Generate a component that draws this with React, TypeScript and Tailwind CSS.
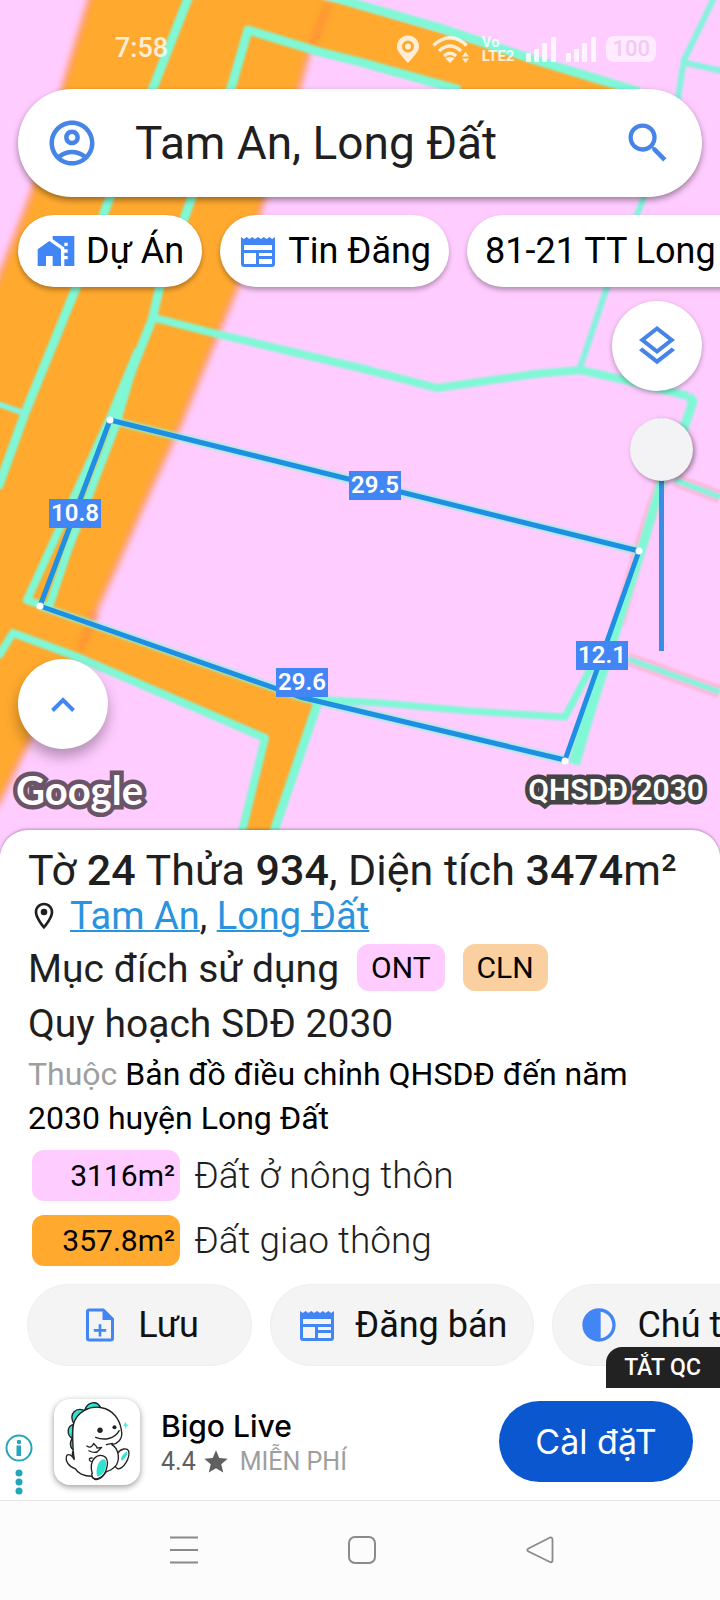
import React from 'react';
import {
  MdContrast,
  MdHomeWork,
  MdOutlineAccountCircle,
  MdOutlineLayers,
  MdOutlineLocationOn,
  MdSearch,
  MdStar,
} from 'react-icons/md';

interface Edge {
  length: string;
  x: number;
  y: number;
}

interface LandUse {
  area: string;
  name: string;
  swatch: string;
}

const edges: Edge[] = [
  { length: '29.5', x: 375, y: 486 },
  { length: '10.8', x: 75, y: 514 },
  { length: '12.1', x: 602, y: 656 },
  { length: '29.6', x: 302, y: 683 },
];

const landUses: LandUse[] = [
  { area: '3116m²', name: 'Đất ở nông thôn', swatch: 'bg-[#ffccff]' },
  { area: '357.8m²', name: 'Đất giao thông', swatch: 'bg-[#ffa92e]' },
];

const ParcelMap: React.FC = () => {
  return (
    <svg viewBox="0 0 720 880" className="absolute inset-x-0 top-0 w-full" aria-hidden="true">
      <defs>
        <filter id="soft" x="-5%" y="-5%" width="110%" height="110%">
          <feGaussianBlur stdDeviation="3" />
        </filter>
        <filter id="softLine" x="-5%" y="-5%" width="110%" height="110%">
          <feGaussianBlur stdDeviation="1.3" />
        </filter>
      </defs>
      <rect width="720" height="880" fill="#ffccff" />

      {/* roads */}
      <g filter="url(#soft)" fill="#ffa92e" stroke="#ff8f6a" strokeOpacity="0.6" strokeWidth="5">
        <path d="M92-10 65 80 30 198-10 300V815L0 800 22 755 75 655 98 606 118 562 150 490 180 425 213 345 236 290 262 205 300 85 318 20 328-10Z" />
      </g>
      <g filter="url(#softLine)" fill="#ffa92e">
        <path d="M320 0 340 2 440 32 535 62 640 92 460 92 360 64 247 30Z" />
        <path d="M40 606 275 688 318 702 270 840 238 840 265 738 75 658 13 632Z" />
      </g>
      <path d="M328 5 312 45M96 612 80 650" stroke="#ff7f3a" strokeWidth="6" opacity="0.6" filter="url(#soft)" />

      {/* parcel borders */}
      <g filter="url(#softLine)" fill="none" strokeLinejoin="round">
        <path d="M662 480 639 551 618 625M675 480 720 497M628 659 720 692" stroke="#ffa0b0" strokeOpacity="0.5" strokeWidth="13" />
        <g stroke="#80f8d6" strokeWidth="9">
          <path d="M189-4 153 88 107 205 76 288 25 413-2 488" />
          <path d="M232 85 189 205 159 290 152 320 117 407" />
          <path d="M232 85 248 30 320 52 360 62 460 90" />
          <path d="M322-6 360 5 440 28 535 60 640 92" />
          <path d="M138 350 110 418 27 600 52 609M138 350 116 425 68 550 50 604" strokeWidth="8" />
          <path d="M155 318 213 333 360 368 437 388 535 374 580 370 625 380 688 396" strokeWidth="8" />
          <path d="M688 396 693 401 680 440M662 480 642 548 575 762" />
          <path d="M600 672 574 764" strokeWidth="12" />
          <path d="M-2 657 13 633 75 656 265 738 240 840" strokeWidth="8" />
          <path d="M318 702 271 840" />
          <path d="M110 420 639 551M40 606 300 697 565 760" strokeWidth="8" strokeOpacity="0.8" />
          <path d="M310 699 380 703 470 711 565 717 595 660" strokeWidth="7" />
        </g>
        <g stroke="#86f2de" strokeWidth="6">
          <path d="M-2 404 24 413" />
          <path d="M715-4 684 60 678 98 641 205 606 290 580 368M682 62 722 71" />
          <path d="M675 480 720 497M628 659 720 692" />
        </g>
      </g>

      {/* selected parcel */}
      <path d="M110 420 639 551 565 760 300 697 40 606Z" fill="none" stroke="#1f8fe3" strokeWidth="5" strokeLinejoin="round" />
      <g fill="#fff">
        <circle cx="110" cy="420" r="3.5" />
        <circle cx="639" cy="551" r="3.5" />
        <circle cx="565" cy="761" r="3.5" />
        <circle cx="40" cy="606" r="3.5" />
      </g>
      {edges.map((edge) => (
        <g key={edge.length}>
          <rect x={edge.x - 26} y={edge.y - 15} width="52" height="29" fill="#4285f4" />
          <text x={edge.x} y={edge.y + 7} textAnchor="middle" fill="#fff" fontSize="24" fontWeight="600">
            {edge.length}
          </text>
        </g>
      ))}
    </svg>
  );
};

const PinIcon: React.FC = () => (
  <svg viewBox="0 0 24 28" className="h-7 w-6" aria-hidden="true">
    <path
      d="M12 28C4 19 1 16 1 11.500a11 11 0 0 1 22 0C23 16 20 19 12 28ZM12 5.500a6 6 0 1 0 0 12 6 6 0 0 0 0-12Z"
      fill="currentColor"
      fillRule="evenodd"
    />
    <circle cx="12" cy="11.500" r="3" fill="currentColor" />
  </svg>
);

const WifiIcon: React.FC = () => (
  <svg viewBox="0 0 38 28" className="h-7 w-[38px]" fill="none" stroke="currentColor" strokeWidth="3.5" aria-hidden="true">
    <path d="M1.500 10.500Q18 -5 34.500 10.500M7 16Q18 6 29 16M12 21Q18 15.500 24 21" />
    <path d="M13.500 23.500Q18 20 22.500 23.500L18 28Z" fill="currentColor" stroke="none" />
    <path d="M30 21.500 33.500 17 37 21.500ZM30 23.500 33.500 28 37 23.500Z" fill="currentColor" stroke="none" />
  </svg>
);

const SignalIcon: React.FC = () => (
  <svg viewBox="0 0 32 26" className="h-[26px] w-8" fill="currentColor" aria-hidden="true">
    <rect x="0" y="17" width="5" height="9" rx="1" />
    <rect x="8" y="13" width="5" height="13" rx="1" />
    <rect x="16" y="7" width="5" height="19" rx="1" />
    <rect x="25" y="1" width="5" height="25" rx="1" />
  </svg>
);

const NewspaperIcon: React.FC = () => (
  <svg viewBox="0 0 34 31" className="h-[31px] w-[34px]" aria-hidden="true">
    <path
      d="M0 1 2.800 3 5.600 1 8.400 3 11.200 1 14 3 17 1 20 3 22.800 1 25.600 3 28.400 1 31.200 3 34 1V28a3 3 0 0 1-3 3H3a3 3 0 0 1-3-3ZM3 9V14H31V9ZM3 17V28H15V17ZM18 17V20H31V17ZM18 23V28H31V23Z"
      fill="currentColor"
      fillRule="evenodd"
    />
  </svg>
);

const NoteAddIcon: React.FC = () => (
  <svg viewBox="0 0 24 24" className="size-10" aria-hidden="true">
    <path d="M5.500 3h8.500l5.500 5.500V20a1 1 0 0 1-1 1h-13a1 1 0 0 1-1-1V4a1 1 0 0 1 1-1Z" fill="none" stroke="currentColor" strokeWidth="1.800" />
    <path d="M13.500 3v6h6ZM11.200 11.500h1.600v2.900h2.900V16h-2.900v2.900h-1.600V16H8.300v-1.600h2.900Z" fill="currentColor" />
  </svg>
);

const StatusBar: React.FC = () => (
  <div className="flex h-[89px] items-center justify-between pt-2 pr-16 pl-[115px] text-white/80">
    <span className="text-[27px] font-medium">7:58</span>
    <div className="flex items-center gap-2">
      <PinIcon />
      <span className="ml-1">
        <WifiIcon />
      </span>
      <div className="mx-1 flex flex-col text-[15px] leading-[14px] font-bold">
        <span>Vo</span>
        <span>LTE2</span>
      </div>
      <SignalIcon />
      <SignalIcon />
      <span className="rounded-lg bg-white/60 px-[6px] text-[22px] leading-[26px] font-medium text-[#f3c8f5]">100</span>
    </div>
  </div>
);

const BigoLogo: React.FC = () => (
  <svg viewBox="162 88 256 256" className="size-[86px] rounded-2xl bg-white shadow-[0_2px_6px_rgba(0,0,0,0.4)]" aria-hidden="true">
    <g fill="#2fe3d3" stroke="#222" strokeWidth="4" strokeLinejoin="round" strokeLinecap="round">
      <path d="M254 120C262 96 290 92 300 112ZM220 160C206 130 228 112 252 122ZM216 206C198 192 202 168 219 164ZM222 240C208 234 208 212 218 206ZM230 268C212 266 214 244 224 240Z" />
      <path d="M352 248C362 236 378 232 384 242C390 264 368 296 352 296C344 292 342 284 344 278" fill="#fff" />
      <path d="M362 272C374 266 382 252 380 244C368 250 360 262 362 272Z" stroke="none" />
      <path
        d="M222 262C218 246 216 180 220 164C228 128 268 106 304 114C338 120 358 150 362 178C370 210 348 222 334 224C352 234 360 262 348 284C336 298 330 300 318 304C300 330 280 330 274 318C250 318 232 308 226 296C206 290 194 272 200 256C206 250 216 256 222 268Z"
        fill="#fff"
      />
      <path d="M272 274C264 270 266 262 276 264M276 310C264 270 290 250 310 258C330 266 320 310 300 324C286 332 276 326 274 312" fill="none" />
      <path d="M290 318C284 290 298 264 314 268C324 284 310 320 290 318Z" stroke="none" />
      <path d="M260 228C268 234 276 232 280 220C284 228 290 226 290 234L304 232L296 240C290 250 276 248 266 242M286 202C310 212 342 208 356 182M318 224L336 220" fill="none" />
    </g>
    <circle cx="299" cy="181" r="8" fill="#222" />
    <circle cx="342" cy="172" r="6" fill="#222" />
    <path d="M375 152C376 162 378 164 386 166C378 168 376 170 375 180C374 170 372 168 366 166C372 164 374 162 375 152Z" fill="#62e8dc" />
  </svg>
);

const Chip: React.FC<{ icon?: React.ReactNode; label: string }> = ({ icon, label }) => (
  <button className="flex h-[72px] shrink-0 items-center gap-[10px] rounded-full bg-white px-[18px] text-[36px] whitespace-nowrap text-black shadow-[0_3px_5px_rgba(0,0,0,0.3)]">
    {icon && <span className="flex w-10 justify-center text-[#4285f4]">{icon}</span>}
    {label}
  </button>
);

const ActionButton: React.FC<{ icon: React.ReactNode; label: string }> = ({ icon, label }) => (
  <button className="flex h-[82px] min-w-[225px] shrink-0 items-center justify-center gap-[18px] rounded-full border border-[#eeeeee] bg-[#f4f4f4] px-[26px] text-[36px] whitespace-nowrap text-[#111111]">
    <span className="flex w-10 justify-center text-[#4285f4]">{icon}</span>
    {label}
  </button>
);

const MapView: React.FC = () => (
  <section className="relative flex-1 overflow-hidden bg-[#ffccff] pb-6">
    <ParcelMap />
    <div className="relative">
      <StatusBar />
      <div className="mx-[18px] flex h-[108px] items-center rounded-full bg-white pr-7 pl-[27px] shadow-[0_3px_6px_rgba(0,0,0,0.4)]">
        <button aria-label="Account" className="text-[#4684e8]">
          <MdOutlineAccountCircle className="size-[54px]" />
        </button>
        <input
          aria-label="Search"
          defaultValue="Tam An, Long Đất"
          className="ml-9 min-w-0 flex-1 bg-transparent text-[46px] text-[#1f1f1f] outline-none"
        />
        <button aria-label="Find" className="text-[#4684e8]">
          <MdSearch className="size-[52px]" />
        </button>
      </div>

      <div className="mt-[18px] flex gap-[18px] overflow-x-clip pl-[18px]">
        <Chip icon={<MdHomeWork className="size-10" />} label="Dự Án" />
        <Chip icon={<NewspaperIcon />} label="Tin Đăng" />
        <Chip label="81-21 TT Long Đất" />
      </div>

      <div className="mt-[14px] flex flex-col items-end px-[18px]">
        <button
          aria-label="Layers"
          className="flex size-[90px] items-center justify-center rounded-full bg-white text-[#4684e8] shadow-[0_2px_5px_rgba(0,0,0,0.3)]"
        >
          <MdOutlineLayers className="size-12" />
        </button>
        <input
          type="range"
          aria-label="Opacity"
          min="0"
          max="100"
          defaultValue="0"
          className="mt-[27px] mr-[9px] h-[233px] w-[63px] appearance-none bg-[linear-gradient(#3a8de4,#3a8de4)] bg-[length:5px_100%] bg-center bg-no-repeat [writing-mode:vertical-lr] [&::-webkit-slider-thumb]:size-[63px] [&::-webkit-slider-thumb]:appearance-none [&::-webkit-slider-thumb]:rounded-full [&::-webkit-slider-thumb]:bg-[#f3f2f4] [&::-webkit-slider-thumb]:shadow-[2px_2px_5px_rgba(0,0,0,0.4)]"
        />
        <button
          aria-label="Expand"
          className="mt-2 flex size-[90px] items-center justify-center self-start rounded-full bg-white text-[#4285f4] shadow-[0_8px_14px_rgba(0,0,0,0.3)]"
        >
          <svg viewBox="0 0 24 15" className="w-6" fill="none" stroke="currentColor" strokeWidth="4" aria-hidden="true">
            <path d="M1.500 13.500 12 3 22.500 13.500" />
          </svg>
        </button>
      </div>

      <div className="mt-[19px] flex h-[62px] items-start justify-between px-4 text-white">
        <span className="font-['Lato',sans-serif] text-[40px] leading-[44px] font-bold [-webkit-text-stroke:9px_#6b5468] [paint-order:stroke_fill]">
          Google
        </span>
        <span className="text-[30px] leading-[44px] font-semibold [-webkit-text-stroke:9px_#444444] [paint-order:stroke_fill]">
          QHSDĐ 2030
        </span>
      </div>
    </div>
  </section>
);

const ParcelSheet: React.FC = () => (
  <section className="relative -mt-6 rounded-t-[28px] bg-white pt-4 text-[#1f1f1f] shadow-[0_-1px_3px_rgba(0,0,0,0.3)]">
    <div className="px-7">
      <h1 className="text-[43px] leading-[48px] whitespace-nowrap">
        Tờ <b className="font-medium">24</b> Thửa <b className="font-medium">934</b>, Diện tích{' '}
        <b className="font-medium">3474</b>m²
      </h1>
      <p className="flex items-center text-[38px] leading-[44px]">
        <MdOutlineLocationOn className="mr-[10px] size-8" />
        <span>
          <a href="#tam-an" className="text-[#2b93dd] underline decoration-2">Tam An</a>,{' '}
          <a href="#long-dat" className="text-[#2b93dd] underline decoration-2">Long Đất</a>
        </span>
      </p>
      <div className="flex h-[62px] items-center gap-[18px] text-[39px]">
        <h2>Mục đích sử dụng</h2>
        <span className="mb-1 rounded-xl bg-[#ffccff] px-[14px] text-[30px] leading-[47px] text-black">ONT</span>
        <span className="mb-1 rounded-xl bg-[#fbd0a0] px-[14px] text-[30px] leading-[47px] text-black">CLN</span>
      </div>
      <h2 className="text-[39px] leading-[48px]">Quy hoạch SDĐ 2030</h2>
      <p className="mt-1 text-[32px] leading-[44px] text-black">
        <span className="text-[#9e9e9e]">Thuộc</span> Bản đồ điều chỉnh QHSDĐ đến năm 2030 huyện Long Đất
      </p>
      <ul className="mt-[10px] flex flex-col gap-[14px] pl-1">
        {landUses.map((use) => (
          <li key={use.name} className="flex items-center gap-[14px]">
            <span className={`w-[148px] rounded-xl pr-[5px] text-right text-[30px] leading-[51px] text-black ${use.swatch}`}>
              {use.area}
            </span>
            <span className="text-[37px] leading-[51px] font-light">{use.name}</span>
          </li>
        ))}
      </ul>
    </div>
    <div className="relative mt-[18px] pb-[22px]">
      <div className="flex gap-[18px] overflow-x-clip pl-[27px]">
        <ActionButton icon={<NoteAddIcon />} label="Lưu" />
        <ActionButton icon={<NewspaperIcon />} label="Đăng bán" />
        <ActionButton icon={<MdContrast className="size-10" />} label="Chú thích" />
      </div>
      <button className="absolute right-0 bottom-0 rounded-tl-2xl bg-[#222222] pr-[19px] pl-[18px] text-[23px] leading-[41px] font-medium text-white">
        TẮT QC
      </button>
    </div>
  </section>
);

const AdBanner: React.FC = () => (
  <aside className="relative flex h-28 items-center bg-white pr-[27px] pb-[5px] pl-[5px]">
    <button aria-label="Ad info" className="mt-[46px] text-[#25a5ba]">
      <svg viewBox="0 0 28 62" className="w-7" fill="currentColor" aria-hidden="true">
        <circle cx="14" cy="14" r="12.500" fill="none" stroke="currentColor" strokeWidth="2" />
        <circle cx="14" cy="8" r="2.200" />
        <path d="M11.500 11.500h4.500V22h-4.500z" />
        <circle cx="14" cy="39" r="3.500" />
        <circle cx="14" cy="48" r="3.500" />
        <circle cx="14" cy="57" r="3.500" />
      </svg>
    </button>
    <div className="ml-[21px]">
      <BigoLogo />
    </div>
    <div className="ml-[21px] flex-1 pt-1">
      <p className="font-['Inter',sans-serif] text-[30px] leading-9 font-medium text-black">Bigo Live</p>
      <p className="flex items-center text-[25px] leading-[36px] text-[#9e9e9e]">
        <span className="text-[#5f5f5f]">4.4</span>
        <MdStar className="mx-[6px] size-7 text-[#5f5f5f]" />
        <span className="ml-1">MIỄN PHÍ</span>
      </p>
    </div>
    <button className="h-[81px] w-[194px] rounded-full bg-[#0b57d0] font-['Inter',sans-serif] text-[34px] text-white">Càl đặT</button>
  </aside>
);

const SystemNav: React.FC = () => (
  <nav className="flex h-[100px] items-center justify-center gap-[150px] border-t border-[#e6e6e6] bg-[#fcfcfc] pb-[2px] pl-1 text-[#8a8a8a]">
    <button aria-label="Recents">
      <svg viewBox="0 0 28 28" className="size-7" stroke="currentColor" strokeWidth="2" aria-hidden="true">
        <path d="M0 1.500h28M0 14h28M0 26.500h28" />
      </svg>
    </button>
    <button aria-label="Home">
      <svg viewBox="0 0 28 28" className="size-7" fill="none" stroke="currentColor" strokeWidth="2" aria-hidden="true">
        <rect x="1" y="1" width="26" height="26" rx="6" />
      </svg>
    </button>
    <button aria-label="Back">
      <svg viewBox="0 0 28 28" className="size-7" fill="none" stroke="currentColor" strokeWidth="1.800" aria-hidden="true">
        <path d="M24 1.500Q26.500 1 26.500 4V24Q26.500 27 24 26L2.500 15.500Q0 14 2.500 12.500Z" />
      </svg>
    </button>
  </nav>
);

export default function App() {
  return (
    <main className="flex min-h-screen flex-col overflow-x-clip bg-white font-['Roboto',sans-serif]">
      <MapView />
      <ParcelSheet />
      <AdBanner />
      <SystemNav />
    </main>
  );
}
